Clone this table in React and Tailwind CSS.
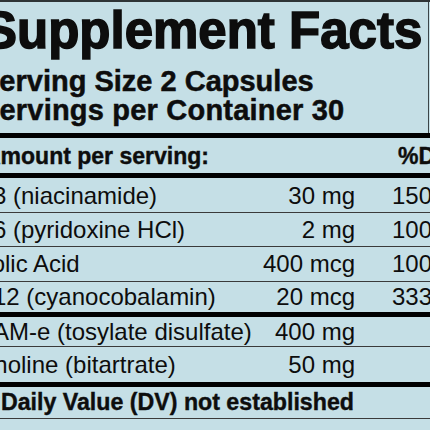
import React from "react";

const rows = [
  { name: "B3 (niacinamide)", amount: "30 mg", dv: "150%", h: "h-[35px] pt-[2px]", line: "border-b border-[#3a3a3a]" },
  { name: "B6 (pyridoxine HCl)", amount: "2 mg", dv: "100%", h: "h-[34px]", line: "border-b border-[#3a3a3a]" },
  { name: "Folic Acid", amount: "400 mcg", dv: "100%", h: "h-[35px]", line: "border-b border-[#3a3a3a]" },
  { name: "B12 (cyanocobalamin)", amount: "20 mcg", dv: "333%", h: "h-[35px]", line: "border-b-[5px] border-black" },
  { name: "SAM-e (tosylate disulfate)", amount: "400 mg", dv: "", h: "h-[30px]", line: "border-b border-[#3a3a3a]" },
  { name: "Choline (bitartrate)", amount: "50 mg", dv: "", h: "h-[40px]", line: "border-b-[5px] border-black" },
];

const App = () => {
  return (
    <div className="w-[430px] h-[430px] overflow-hidden bg-[#c5dfe6] text-[#0d0d0d] font-['Liberation_Sans',Arial,sans-serif] border-t-2 border-[#2e3436]">
      {/* heading block */}
      <div className="w-[429px] h-[131px] border-r border-[#3a4448]">
        <h1 className="ml-[-17px] pt-[3px] text-[51px] leading-[52px] font-bold [-webkit-text-stroke:1.5px_#0d0d0d] whitespace-nowrap">
          Supplement Facts
        </h1>
        <p className="ml-[-20px] mt-[10px] text-[29px] leading-[29px] font-bold [-webkit-text-stroke:0.5px_#0d0d0d] whitespace-nowrap">
          Serving Size 2 Capsules
        </p>
        <p className="ml-[-20px] text-[29px] leading-[29px] font-bold tracking-[0.2px] [-webkit-text-stroke:0.5px_#0d0d0d] whitespace-nowrap">
          Servings per Container 30
        </p>
      </div>

      <div className="border-b-[5px] border-black" />

      <div className="flex items-end h-[40px] pb-[5px] border-b-[5px] border-black ml-[-16px] text-[23px] leading-none font-bold [-webkit-text-stroke:0.4px_#0d0d0d] whitespace-nowrap">
        <span className="flex-1">Amount per serving:</span>
        <span className="w-[32px] shrink-0">%DV</span>
      </div>

      {rows.map((r) => (
        <div
          key={r.name}
          className={`flex items-center ${r.h} ${r.line} ml-[-23px] text-[24px] leading-none whitespace-nowrap`}
        >
          <span className="flex-1">{r.name}</span>
          <span className="w-[100px] shrink-0 text-right">{r.amount}</span>
          <span className="w-[75px] shrink-0 pl-[37px]">{r.dv}</span>
        </div>
      ))}

      <div className="flex items-center h-[32px] border-b border-[#3a3a3a] ml-[-12px] text-[23.2px] leading-none font-bold [-webkit-text-stroke:0.4px_#0d0d0d] whitespace-nowrap">
        †Daily Value (DV) not established
      </div>
    </div>
  );
};

export default App;
